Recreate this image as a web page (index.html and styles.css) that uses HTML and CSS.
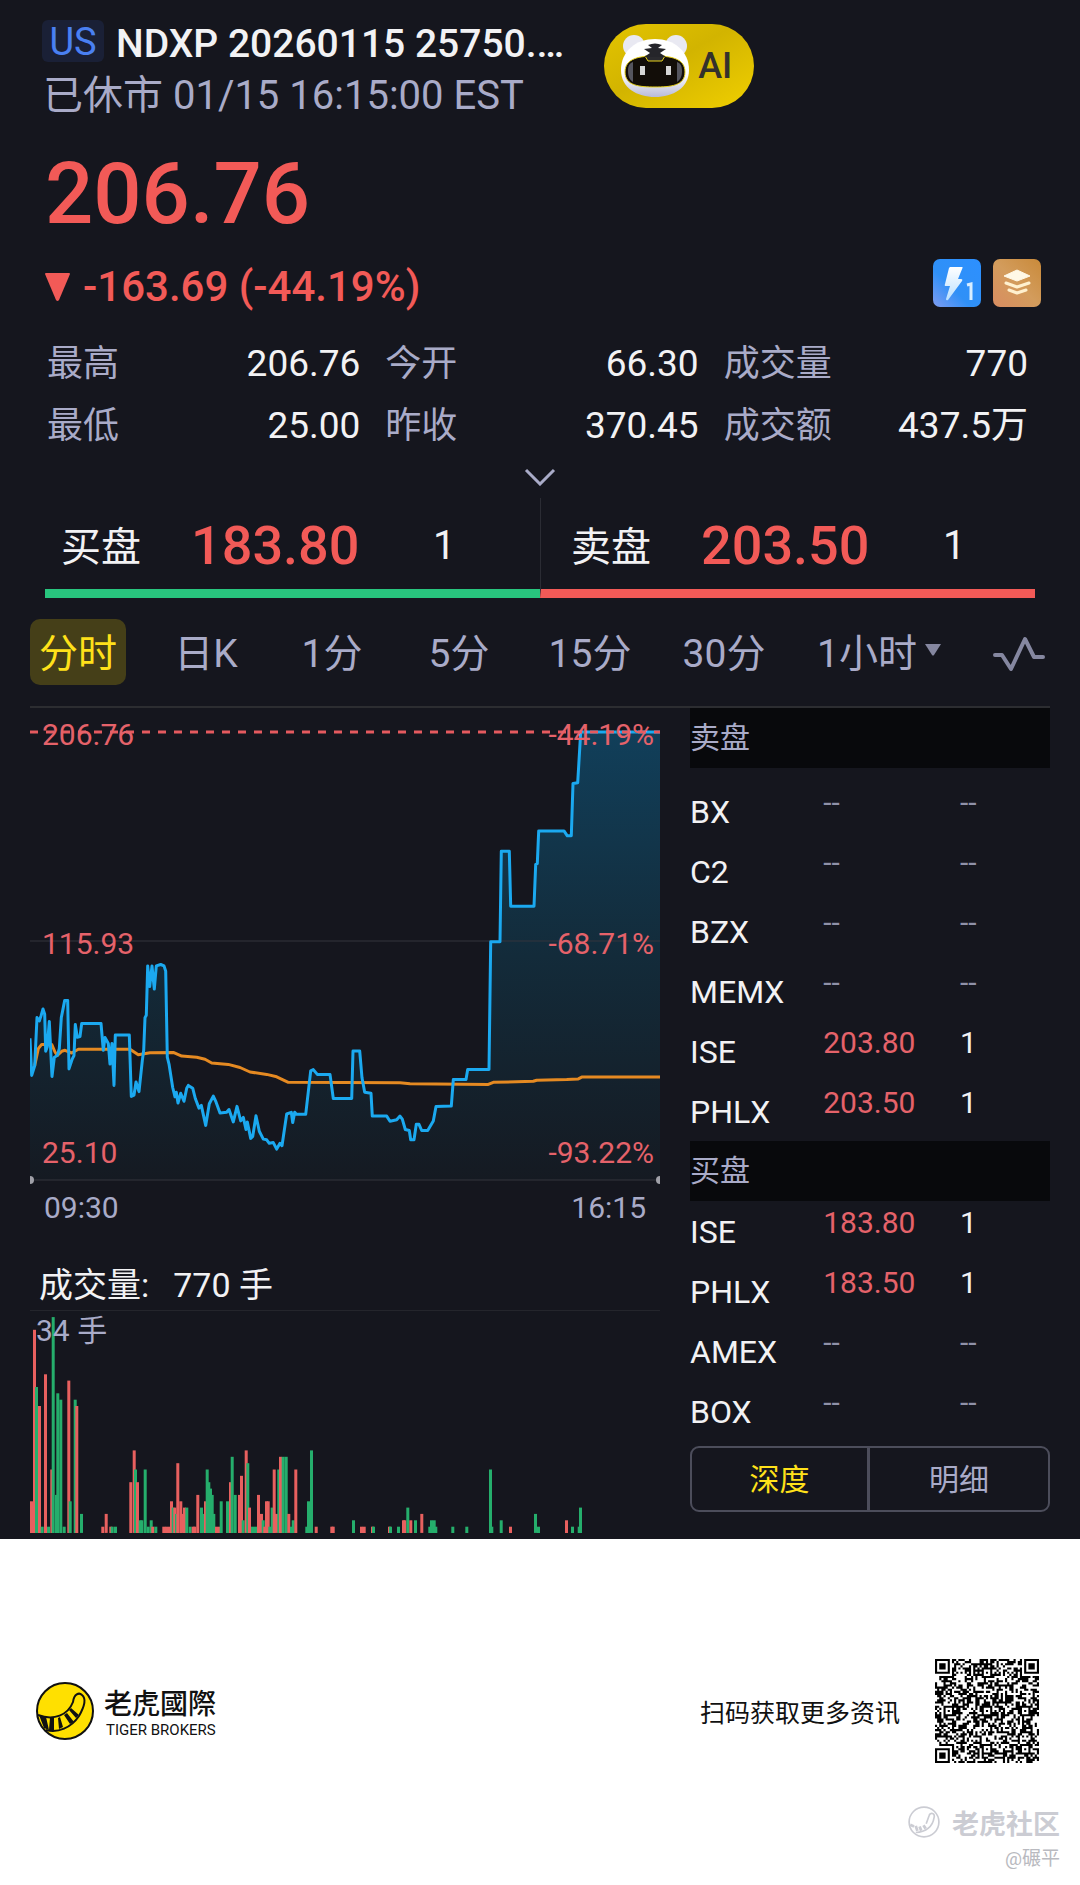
FILE: index.html
```html
<!DOCTYPE html>
<html lang="zh-CN">
<head>
<meta charset="utf-8">
<meta name="viewport" content="width=device-width, initial-scale=1">
<title>NDXP 20260115</title>
<link rel="stylesheet" href="styles.css">
</head>
<body>
<main class="quote">
  <header class="head">
    <div class="ident">
      <div class="name-row"><span class="market">US</span><h1 class="name">NDXP 20260115 25750.…</h1></div>
      <p class="status">已休市 01/15 16:15:00 EST</p>
    </div>
    <button class="ai" type="button">
      <svg class="ai-face" width="70" height="64" viewBox="0 0 70 64" aria-hidden="true">
        <defs>
          <linearGradient id="face" x1="0" y1="0" x2="0" y2="1"><stop offset=".6" stop-color="#fff"/><stop offset="1" stop-color="#b9bbd8"/></linearGradient>
        </defs>
        <circle cx="14" cy="12" r="11" fill="#e9e9f2"/><circle cx="56" cy="12" r="11" fill="#e9e9f2"/>
        <path d="M35 5C54 5 69 17 69 36C69 54 53 63 35 63C17 63 1 54 1 36C1 17 16 5 35 5Z" fill="url(#face)"/>
        <path d="M5 38C5 24 20 22 35 22S65 24 65 38C65 52 50 53 35 53S5 52 5 38Z" fill="#120d08" stroke="#e8d21c" stroke-width="1"/>
        <path d="M8 37C8 31 10 29 13 28V48C10 46 8 43 8 37ZM62 37C62 31 60 29 57 28V48C60 46 62 43 62 37Z" fill="#55555e"/>
        <path d="M25 22L28 27H42L45 22Z" fill="#2a2a2e" stroke="#e8d21c" stroke-width="1"/>
        <path d="M28 11Q35 8 42 11L38 14L46 15L40 19L46 23H24L30 19L24 15L32 14Z" fill="#25252a"/>
        <path d="M20 32h5v9h-5zM46 32h5v9h-5z" fill="#d6d6d6"/>
      </svg>
      <span>AI</span>
    </button>
  </header>

  <p class="price">206.76</p>
  <div class="change-row">
    <p class="change"><svg width="25" height="28" viewBox="0 0 25 28" aria-hidden="true"><path d="M0 1Q0 0 1 0H24Q25 0 25 1L14 27Q12.500 29 11 27Z" fill="#f25a57"/></svg><span>-163.69 (-44.19%)</span></p>
    <div class="badges">
      <svg width="48" height="48" viewBox="0 0 48 48" aria-hidden="true">
        <defs>
          <linearGradient id="blue" x1="0" y1="1" x2="1" y2="0"><stop offset="0" stop-color="#7f9cf0"/><stop offset=".4" stop-color="#2f90f7"/><stop offset="1" stop-color="#2d90ff"/></linearGradient>
          <linearGradient id="bolt" x1="0" y1="0" x2="0" y2="1"><stop offset="0" stop-color="#fff"/><stop offset="1" stop-color="#b9e0ff"/></linearGradient>
        </defs>
        <rect width="48" height="48" rx="7" fill="url(#blue)"/>
        <path d="M17 8H29Q30 8 29.500 9L25 20H28Q30 20 29 22L15 41Q13 42 13 40L17 27H13Q11 27 12 25L16 9Z" fill="url(#bolt)"/>
        <path d="M34 26L38 25V41" fill="none" stroke="#d8edff" stroke-width="3"/>
      </svg>
      <svg width="48" height="48" viewBox="0 0 48 48" aria-hidden="true">
        <defs><linearGradient id="gold" x1="0" y1="1" x2="1" y2="0"><stop offset="0" stop-color="#d98d62"/><stop offset=".5" stop-color="#d39c5c"/><stop offset="1" stop-color="#c98a3a"/></linearGradient></defs>
        <rect width="48" height="48" rx="7" fill="url(#gold)"/>
        <path d="M24 11L37 17L24 22L11 17Z" fill="#fff8e6" stroke="#fff8e6" stroke-width="1" stroke-linejoin="round"/>
        <path d="M13 24L24 28L36 24M16 31L24 34L33 31" fill="none" stroke="#fff1cf" stroke-width="3" stroke-linecap="round" stroke-linejoin="round"/>
      </svg>
    </div>
  </div>

  <dl class="stats">
    <div><dt>最高</dt><dd>206.76</dd></div>
    <div><dt>今开</dt><dd>66.30</dd></div>
    <div><dt>成交量</dt><dd>770</dd></div>
    <div><dt>最低</dt><dd>25.00</dd></div>
    <div><dt>昨收</dt><dd>370.45</dd></div>
    <div><dt>成交额</dt><dd>437.5万</dd></div>
  </dl>
  <button class="expand" type="button" aria-label="展开">
    <svg width="32" height="18" viewBox="0 0 32 18" aria-hidden="true"><path d="M2 2L16 16L30 2" fill="none" stroke="#a9abc8" stroke-width="3"/></svg>
  </button>

  <section class="touch">
    <div class="side buy"><span class="side-name">买盘</span><span class="side-price">183.80</span><span class="side-size">1</span></div>
    <div class="side sell"><span class="side-name">卖盘</span><span class="side-price">203.50</span><span class="side-size">1</span></div>
  </section>

  <nav class="tabs">
    <button class="tab active" type="button">分时</button>
    <button class="tab second" type="button">日K</button>
    <button class="tab" type="button">1分</button>
    <button class="tab" type="button">5分</button>
    <button class="tab" type="button">15分</button>
    <button class="tab" type="button">30分</button>
    <button class="tab" type="button">1小时<svg width="16" height="12" viewBox="0 0 16 12" aria-hidden="true"><path d="M0 0H16L9 11Q8 12 7 11Z" fill="#8587a0"/></svg></button>
    <button class="tab last" type="button" aria-label="指标"><svg width="52" height="36" viewBox="0 0 52 36" aria-hidden="true"><path d="M2 19H9L18 33L32 3L41 21H50" fill="none" stroke="#8587a0" stroke-width="4" stroke-linejoin="round" stroke-linecap="round"/></svg></button>
  </nav>

  <div class="board">
    <section class="charts">
      <div class="trend">
        <svg class="plot" height="477" viewBox="0 0 630 477" preserveAspectRatio="none" aria-hidden="true">
          <defs><linearGradient id="area" x1="0" y1="24" x2="0" y2="472" gradientUnits="userSpaceOnUse"><stop offset="0" stop-color="#113f5a"/><stop offset=".5" stop-color="#132b3a"/><stop offset="1" stop-color="#151a22"/></linearGradient></defs>
          <path id="fill" fill="url(#area)"/>
          <path d="M0 233H630M0 472H630" stroke="#34353d" stroke-width="1"/>
          <path id="avg" class="curve avg"/>
          <path id="line" class="curve line"/>
          <path d="M0 24H630" stroke="#e55a5f" stroke-width="3" stroke-dasharray="8 8"/>
          <circle cx="0" cy="472" r="4" fill="#a0a0a8"/><circle cx="630" cy="472" r="4" fill="#a0a0a8"/>
        </svg>
        <span class="tick top">206.76</span><span class="tick top right">-44.19%</span>
        <span class="tick mid">115.93</span><span class="tick mid right">-68.71%</span>
        <span class="tick low">25.10</span><span class="tick low right">-93.22%</span>
      </div>
      <div class="times"><span>09:30</span><span>16:15</span></div>
      <h2 class="vol-title"><span>成交量:</span><span>770 手</span></h2>
      <div class="volume">
        <svg class="plot" id="bars" height="222" viewBox="0 0 630 222" preserveAspectRatio="none" aria-hidden="true"></svg>
        <span class="vol-max">34 手</span>
      </div>
    </section>

    <section class="depth">
      <table class="book">
        <thead><tr><th colspan="3">卖盘</th></tr></thead>
        <tbody class="asks">
          <tr><td class="venue">BX</td><td class="none">--</td><td class="none">--</td></tr>
          <tr><td class="venue">C2</td><td class="none">--</td><td class="none">--</td></tr>
          <tr><td class="venue">BZX</td><td class="none">--</td><td class="none">--</td></tr>
          <tr><td class="venue">MEMX</td><td class="none">--</td><td class="none">--</td></tr>
          <tr><td class="venue">ISE</td><td class="down">203.80</td><td>1</td></tr>
          <tr><td class="venue">PHLX</td><td class="down">203.50</td><td>1</td></tr>
        </tbody>
      </table>
      <table class="book">
        <thead><tr><th colspan="3">买盘</th></tr></thead>
        <tbody>
          <tr><td class="venue">ISE</td><td class="down">183.80</td><td>1</td></tr>
          <tr><td class="venue">PHLX</td><td class="down">183.50</td><td>1</td></tr>
          <tr><td class="venue">AMEX</td><td class="none">--</td><td class="none">--</td></tr>
          <tr><td class="venue">BOX</td><td class="none">--</td><td class="none">--</td></tr>
        </tbody>
      </table>
      <div class="switch"><button class="on" type="button">深度</button><button type="button">明细</button></div>
    </section>
  </div>
</main>

<footer class="foot">
  <div class="foot-row">
    <div class="brand">
      <svg width="58" height="58" viewBox="0 0 58 58" aria-hidden="true">
        <circle cx="29" cy="29" r="28" fill="#ffe000" stroke="#111" stroke-width="2"/>
        <path d="M2 33C18 39 32 33 37 20C38 12 43 10 46 13C51 17 47 27 43 34C35 46 22 51 10 48" fill="none" stroke="#111" stroke-width="2"/>
        <path d="M3 33L10 35L13 48L8 46ZM14 36L18 36L18 49L13 48ZM22 36L24 35L27 45L23 47ZM28 33L31 31L38 40L34 42ZM33 28L35 26L43 33L40 36Z" fill="#111"/>
      </svg>
      <div class="brand-text"><strong lang="zh-TW">老虎國際</strong><span>TIGER BROKERS</span></div>
    </div>
    <div class="scan">
      <span>扫码获取更多资讯</span>
      <svg id="qr" width="104" height="104" viewBox="0 0 49 49" role="img" aria-label="二维码"></svg>
    </div>
  </div>
  <div class="mark">
    <div class="mark-name">
      <svg width="32" height="32" viewBox="0 0 58 58" aria-hidden="true">
        <g fill="none" stroke="#cbccd3" stroke-width="3"><circle cx="29" cy="29" r="27"/><path d="M33 32L38 18C40 10 50 13 47 22C45 36 33 48 14 48"/><path d="M4 34L11 37M14 36L17 45M21 37L24 45M28 35L32 41" stroke-width="5"/></g>
      </svg>
      <span>老虎社区</span>
    </div>
    <span class="author">@碾平</span>
  </div>
</footer>
<script src="charts.js"></script>
</body>
</html>
```
FILE: styles.css
```css
* { box-sizing: border-box; margin: 0; padding: 0; }

body {
  background: #fff;
  color: #f2f2f4;
  font-family: Roboto, "Noto Sans CJK SC", sans-serif;
  font-size: 30px;
}

button {
  background: none;
  border: 0;
  color: inherit;
  font: inherit;
  cursor: pointer;
}

svg { display: block; flex: none; }

.quote { background: #15161e; padding: 20px 30px 6px; }

/* Instrument header */
.head { display: flex; gap: 40px; padding-left: 12px; height: 100px; }
.name-row { display: flex; gap: 12px; height: 48px; }
.market {
  width: 62px;
  height: 42px;
  border-radius: 6px;
  background: #1a2036;
  color: #4a80f2;
  font-size: 38px;
  line-height: 44px;
  text-align: center;
}
.name { font-size: 39px; font-weight: 500; line-height: 48px; white-space: nowrap; }
.status { margin-top: 4px; padding-left: 1px; height: 48px; color: #a9abc8; font-size: 40px; line-height: 48px; }
.ai {
  display: flex;
  align-items: center;
  width: 150px;
  height: 84px;
  margin-top: 4px;
  padding-left: 16px;
  gap: 8px;
  border-radius: 42px;
  background: linear-gradient(150deg, #e3c400, #d2b400 45%, #f0cf00);
  color: #33312c;
  font-size: 36px;
  font-weight: 500;
}

.price { margin-top: 26px; padding-left: 15px; color: #f25a57; font-size: 85px; font-weight: 500; line-height: 96px; }
.change-row { display: flex; justify-content: space-between; margin-top: 17px; padding: 0 9px 0 15px; }
.change { display: flex; align-items: center; gap: 13px; padding-top: 4px; color: #f25a57; font-size: 42px; font-weight: 500; line-height: 48px; }
.badges { display: flex; gap: 12px; }

.stats { display: grid; grid-template-columns: repeat(3, 1fr); column-gap: 25px; margin-top: 22px; padding: 0 13px 0 17px; }
.stats div { display: flex; justify-content: space-between; height: 62px; font-size: 36px; line-height: 62px; }
.stats div:nth-child(3n) { padding-right: 9px; }
.stats dt { color: #a9abc8; }
.stats dd { font-size: 37px; }
.expand { display: block; height: 18px; margin: 11px auto 12px; }

/* Best bid and ask */
.touch { display: grid; grid-template-columns: 1fr 1fr; margin: 0 15px; }
.side { display: flex; align-items: center; height: 100px; padding: 4px 0 0 16px; border-bottom: 9px solid #28c57e; font-size: 40px; }
.sell { padding-left: 30px; border-bottom-color: #f25a57; border-left: 1px solid #2b2c34; }
.side-name { width: 130px; padding-bottom: 3px; }
.side-price { width: 242px; color: #f25a57; font-size: 54px; font-weight: 500; }

/* Period tabs */
.tabs {
  display: grid;
  grid-template-columns: 96fr 144fr 124fr 130fr 132fr 136fr 174fr 84fr;
  margin-top: 21px;
  height: 66px;
  color: #a9abc8;
  font-size: 39px;
}
.tab { display: flex; align-items: center; justify-content: center; gap: 8px; padding-bottom: 4px; white-space: nowrap; }
.active { border-radius: 10px; background: #453f18; color: #ffe11a; }
.second { padding-left: 16px; }
.last { justify-content: flex-end; padding: 4px 5px 0 0; }

.board { display: grid; grid-template-columns: 630fr 360fr; gap: 30px; margin-top: 21px; border-top: 2px solid #2c2d31; }

/* Price and volume charts */
.plot { width: 100%; }
.trend, .volume { position: relative; }
.curve { fill: none; stroke-width: 3px; stroke-linejoin: round; }
.line { stroke: #1ba9f0; }
.avg { stroke: #e58a22; }
.tick { position: absolute; left: 12px; color: #e5626a; line-height: 36px; }
.right { left: auto; right: 6px; }
.top { top: 9px; }
.mid { top: 218px; }
.low { top: 427px; }
.times { display: flex; justify-content: space-between; padding: 5px 14px 0; color: #a9abc8; line-height: 36px; }
.vol-title { display: flex; gap: 24px; height: 50px; margin-top: 35px; padding-left: 9px; border-bottom: 1px solid #24252c; font-size: 34px; font-weight: 400; line-height: 48px; }
.vol-max { position: absolute; left: 6px; top: 2px; color: #a9abc8; line-height: 36px; }

/* Order book */
.book { width: 100%; border-collapse: collapse; }
.book th { height: 60px; background: #08090c; color: #a9abc8; font-weight: 400; line-height: 60px; text-align: left; }
.book td { height: 60px; vertical-align: top; line-height: 44px; }
.book .venue { width: 37%; padding-top: 2px; font-size: 32px; line-height: 58px; }
.book .none { color: #8f91a8; }
.book td:last-child { width: 25%; }
.book .down { color: #e5626a; }
.asks::before { content: ""; display: block; height: 13px; }
.switch { display: grid; grid-template-columns: 1fr 1fr; height: 66px; margin-top: 5px; border: 2px solid #4c4d5b; border-radius: 9px; color: #a9abc8; }
.switch button { padding-bottom: 4px; }
.switch .on { border-right: 3px solid #4c4d5b; color: #ffe11a; }

/* Brand footer */
.foot { padding: 120px 20px 14px 36px; color: #111; }
.foot-row { display: flex; align-items: center; justify-content: space-between; padding-right: 21px; }
.brand { display: flex; align-items: center; gap: 10px; }
.brand-text { display: flex; flex-direction: column; padding-top: 3px; }
.brand-text strong { font-family: Roboto, "Noto Sans CJK TC", sans-serif; font-size: 28px; font-weight: 500; line-height: 34px; }
.brand-text span { padding-left: 2px; font-size: 15px; line-height: 16px; }
.scan { display: flex; align-items: center; gap: 35px; font-size: 25px; }
.mark { display: flex; flex-direction: column; align-items: flex-end; gap: 4px; margin-top: 41px; color: #cbccd3; }
.mark-name { display: flex; align-items: center; gap: 12px; height: 36px; font-size: 27px; font-weight: 700; }
.author { color: #b9bac0; font-size: 19px; line-height: 30px; }
```
FILE: charts.js
```js
// Curve samples use a finer grid than the plot: 3 units per pixel across, 2.904 down.
const px = (x) => ((x - 90) / 3).toFixed(1);
const py = (y) => ((y - 26) / 2.904).toFixed(1);
const toPath = (s) => 'M' + s.trim().split(/\s+/).map((p) => {
  const [x, y] = p.split(',').map(Number);
  return px(x) + ' ' + py(y);
}).join('L');

const price = toPath(`90,985 95,1093 104,1065 111,925 118,935 123,920 129,900 134,915 137,1023 142,1010
148,936 156,1096 163,1040 172,1035 178,1015 184,925 194,875 203,875 207,1074 217,1045 222,1035 226,945
232,982 240,980 245,942 303,942 310,1020 315,983 325,1000 330,1060 336,1000 342,1122 346,976 388,976
394,1154 402,1150 408,1112 417,1140 427,1050 431,1020 435,925 439,918 443,775 449,835 456,775 463,842
469,775 482,771 492,775 497,790 502,1040 507,1060 518,1128 525,1155 529,1142 534,1173 542,1145 552,1168
560,1130 565,1122 578,1130 586,1160 597,1188 604,1180 617,1238 628,1175 640,1153 648,1170 660,1202
680,1200 687,1192 700,1228 711,1183 722,1225 730,1215 738,1250 742,1228 752,1276 758,1270 768,1210
778,1255 790,1278 800,1280 808,1290 820,1288 830,1307 840,1290 846,1297 860,1205 874,1200 878,1230
884,1200 889,1206 917,1206 932,1080 940,1076 952,1090 990,1090 1000,1160 1055,1160 1059,1022 1079,1022
1086,1100 1094,1142 1113,1145 1117,1211 1160,1211 1170,1226 1190,1222 1200,1211 1207,1220 1216,1250
1228,1253 1232,1280 1242,1280 1249,1235 1257,1235 1265,1253 1283,1253 1300,1225 1308,1183 1354,1182
1360,1105 1398,1105 1403,1076 1467,1076 1472,705 1500,705 1504,442 1528,442 1532,602 1602,602 1607,480
1612,478 1616,383 1692,383 1702,397 1714,397 1719,245 1733,243 1742,96 1980,96`);
const average = toPath(`104,1065 115,1015 125,1003 155,1003 165,1025 172,1035 185,1023 195,1020 215,1028
235,1017 390,1017 415,1033 450,1027 520,1026 545,1037 590,1040 615,1046 635,1057 685,1061 720,1070
750,1083 800,1090 830,1097 865,1113 1200,1114 1230,1117 1465,1119 1480,1113 1600,1110 1610,1107
1700,1105 1735,1103 1745,1098 1980,1098`);
document.getElementById('line').setAttribute('d', price);
document.getElementById('avg').setAttribute('d', average);
document.getElementById('fill').setAttribute('d', price + 'L630 472L0 472Z');

// Volume bars: position (thirds of a pixel), direction, lots.
const volume = `90r5 99r32 105g23 114r20 122g1 132r25 141g1 151r10 155g34 165g6 169g22 178g21 188g1 202r24
206g5 221g21 226r20 240g3 304r1 314r3 328r1 332g1 342g1 388r8 398r13 402g10 408r8 416g2 421g2 431g10
440g1 449g2 454r1 463g1 487r1 495r1 504r1 510r5 515g4 520r4 525g3 529r11 538r5 544r3 549r4 556g4 566g1
575r1 580r1 589r6 600g4 605g3 612r5 617g10 622g8 627g7 632g6 637g3 645r1 654r1 659g5 678g5 687r8 692g12
701g6 714r6 720r9 725g2 734r13 739g11 744r4 753g1 762g1 771r6 780r3 785g2 790r1 795r5 800r5 805g1 812g4
818r10 825r3 832g10 837r12 845g12 854g12 862r3 870g1 875g2 883r10 916g1 921g5 930g13 944r1 991r1 995r1
1056g2 1080r1 1088r1 1113r1 1116g1 1164r1 1167g1 1191g1 1206r2 1210r2 1219g4 1228r2 1242g2 1261r3 1285g1
1290g2 1298g2 1303g1 1354g1 1396g1 1467g10 1471g1 1499g2 1527r1 1602g3 1611g1 1695r2 1713g1 1733g1 1737g4`;
document.getElementById('bars').innerHTML = volume.trim().split(/\s+/).map((b) => {
  const [, x, dir, lots] = b.match(/(\d+)([rg])(\d+)/);
  const h = lots * 6.35;
  return `<rect x="${px(+x)}" y="${(222 - h).toFixed(1)}" width="3" height="${h.toFixed(1)}" fill="${dir === 'r' ? '#e8605f' : '#25ae6c'}"/>`;
}).join('');

// 49-module code: finder, alignment and timing patterns over the data modules.
const N = 49;
let seed = 20260115;
const random = () => (seed = (seed * 1103515245 + 12345) % 2147483648) / 2147483648;
const ring = (dx, dy, dark) => dark.includes(Math.max(Math.abs(dx), Math.abs(dy)));
let modules = '';
for (let y = 0; y < N; y++) {
  for (let x = 0; x < N; x++) {
    let on = random() > 0.47;
    if (x === 6 || y === 6) on = (x + y) % 2 === 0;
    for (const cx of [6, 24, 42]) for (const cy of [6, 24, 42]) {
      if (Math.abs(x - cx) < 3 && Math.abs(y - cy) < 3) on = ring(x - cx, y - cy, [0, 2]);
    }
    for (const [cx, cy] of [[3, 3], [45, 3], [3, 45]]) {
      if (Math.abs(x - cx) < 5 && Math.abs(y - cy) < 5) on = ring(x - cx, y - cy, [0, 1, 3]);
    }
    if (on) modules += `M${x} ${y}h1v1h-1z`;
  }
}
document.getElementById('qr').innerHTML = `<path d="${modules}" fill="#000"/>`;
```
